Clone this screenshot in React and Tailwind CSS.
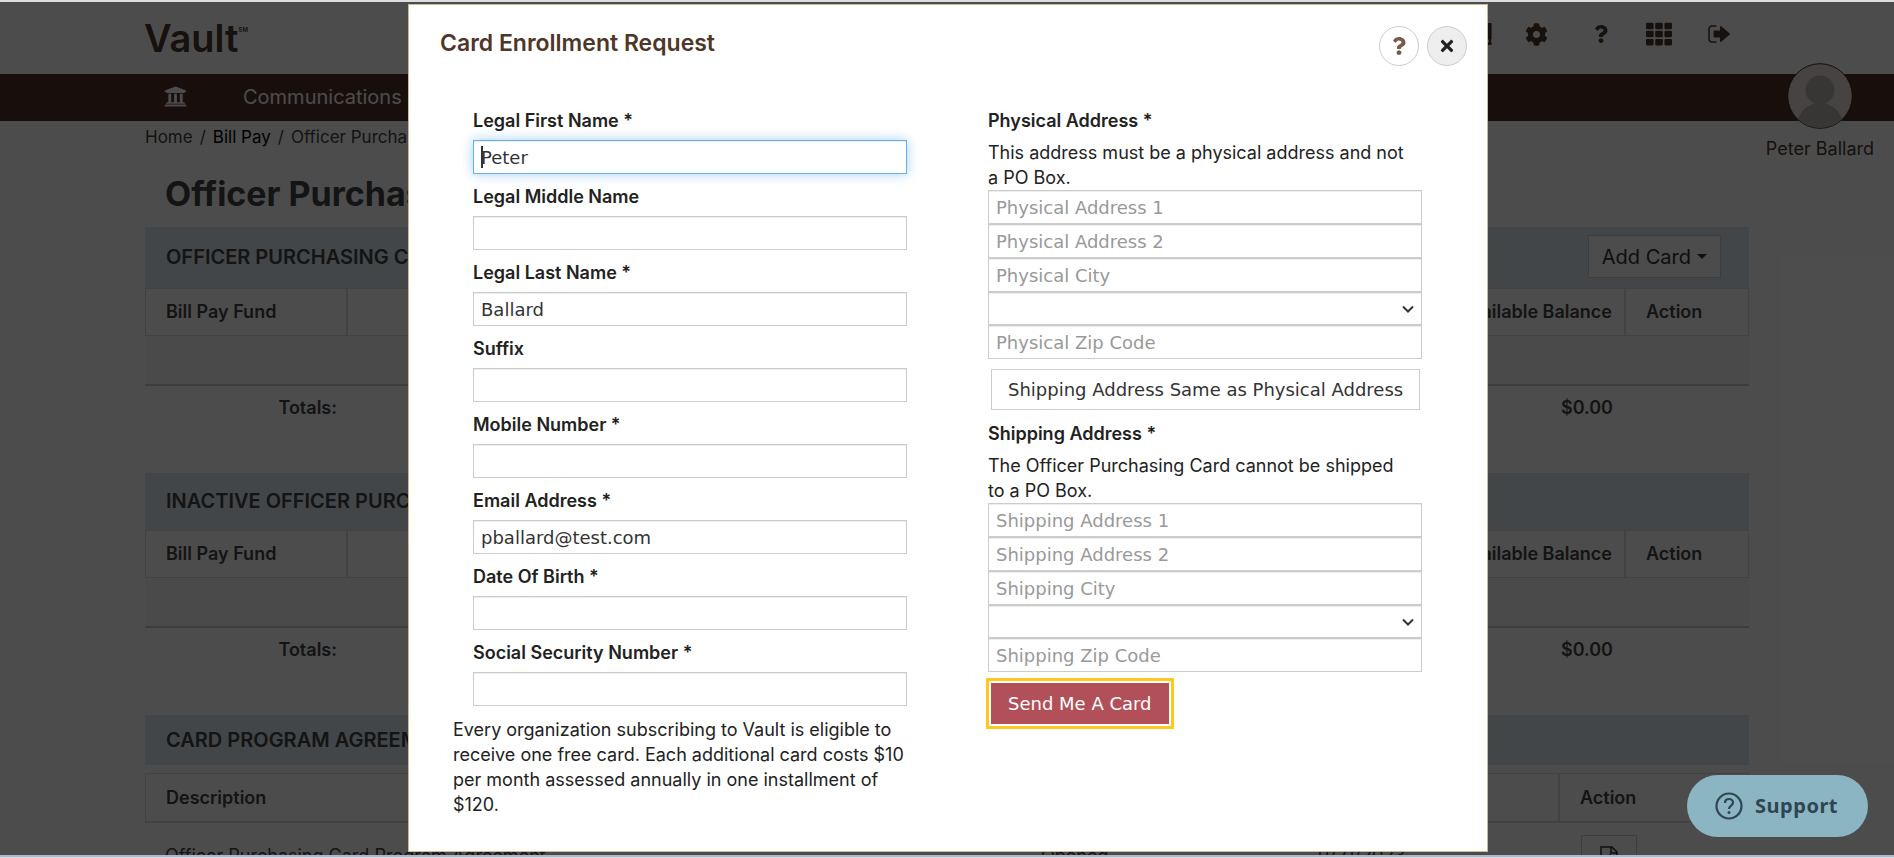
import { useState } from 'react'
import { FaBook, FaCog, FaQuestion, FaTh, FaTimes, FaUniversity } from 'react-icons/fa'

const personFields = [
  { name: 'firstName', label: 'Legal First Name *' },
  { name: 'middleName', label: 'Legal Middle Name' },
  { name: 'lastName', label: 'Legal Last Name *' },
  { name: 'suffix', label: 'Suffix' },
  { name: 'mobile', label: 'Mobile Number *' },
  { name: 'email', label: 'Email Address *' },
  { name: 'birthDate', label: 'Date Of Birth *' },
  { name: 'ssn', label: 'Social Security Number *' }
]

const inputBase =
  'block w-full px-[7px] bg-white border text-lg text-[#333] placeholder:text-[#999] font-[DejaVu_Sans,sans-serif] outline-none'
const inputClass = `${inputBase} h-[34px] border-[#ccc] shadow-[inset_0_1px_1px_rgba(0,0,0,0.075)]`
const selectClass = `${inputBase} h-[33px] appearance-none border-[#ccc] shadow-[inset_0_1px_1px_rgba(0,0,0,0.075)]`
const activeInputClass = `${inputBase} h-[34px] border-[#66afe9] shadow-[inset_0_1px_1px_rgba(0,0,0,0.075),0_0_12px_rgba(102,175,233,0.6)]`

function SignOutIcon() {
  return (
    <svg viewBox="0 0 22 18" className="w-[22px] h-[18px]">
      <path d="M8 1H4a3 3 0 0 0-3 3v10a3 3 0 0 0 3 3h4" fill="none" stroke="currentColor" strokeWidth="1.5" strokeLinecap="round" />
      <path d="M6.5 5.500H12V2c0-1 .8-1.300 1.500-.6l8 6.900c.4.400.4 1 0 1.400l-8 6.900c-.7.700-1.500.4-1.500-.6v-3.500H6.500c-.5 0-.9-.4-.9-.9V6.400c0-.5.4-.9.9-.9z" fill="currentColor" />
    </svg>
  )
}

function Header() {
  return (
    <header className="relative">
      <div className="h-[72px] flex items-center justify-between pl-[144px] pr-[164px] pb-2 text-[#4e3b30]">
        <a href="#" className="flex items-start pt-2 text-[38px] leading-[38px] font-semibold">
          Vault<span className="text-[6px] leading-none pt-2">SM</span>
        </a>
        <div className="flex items-center">
          <button aria-label="Library"><FaBook size={22} /></button>
          <button aria-label="Settings" className="ml-8"><FaCog size={23} /></button>
          <button aria-label="Help" className="ml-11"><FaQuestion size={18} /></button>
          <button aria-label="Apps" className="ml-9"><FaTh size={26} /></button>
          <button aria-label="Sign out" className="ml-9"><SignOutIcon /></button>
        </div>
      </div>
      <nav className="h-[47px] flex items-center pl-[164px] pb-[2px] bg-[#50302a] text-white text-xl">
        <a href="#" aria-label="Home" className="mr-14"><FaUniversity size={23} /></a>
        <a href="#">Communications</a>
      </nav>
      <div className="absolute right-5 top-[61px] flex flex-col items-center gap-[6px] text-[#4e3b30]">
        <svg viewBox="0 0 66 66" className="w-[66px] h-[66px]">
          <clipPath id="avatar"><circle cx="33" cy="33" r="32" /></clipPath>
          <circle cx="33" cy="33" r="32.300" fill="#ebe0dd" stroke="#333" strokeWidth="1" />
          <g fill="#b8b4b0" clipPath="url(#avatar)">
            <circle cx="33" cy="27" r="14.500" />
            <path d="M9 66c1-16 11-26 24-26s23 10 24 26z" />
          </g>
        </svg>
        <span className="text-lg leading-7">Peter Ballard</span>
      </div>
    </header>
  )
}

function FundPanel({ title, headClass, children }) {
  return (
    <section className="mb-[43px]">
      <div className={`${headClass} flex items-center justify-between bg-[#dce9f2] pl-[21px] pr-7 pb-[2px]`}>
        <h2 className="text-xl font-semibold">{title}</h2>
        {children}
      </div>
      <table className="w-full border-separate border-spacing-0 text-lg font-semibold">
        <thead>
          <tr className="h-12">
            <th className="w-[202px] pl-5 text-left font-semibold border border-[#ddd]">Bill Pay Fund</th>
            <th className="pr-3 text-right font-semibold border border-[#ddd]">Available Balance</th>
            <th className="w-[124px] pl-5 text-left font-semibold border border-[#ddd]">Action</th>
          </tr>
        </thead>
        <tbody>
          <tr className="h-[50px] bg-[#f9f9f9]">
            <td colSpan="3" className="border-b-2 border-[#ccc]"></td>
          </tr>
          <tr className="h-11">
            <td className="pr-[10px] text-right">Totals:</td>
            <td className="pr-3 text-right">$0.00</td>
            <td></td>
          </tr>
        </tbody>
      </table>
    </section>
  )
}

function AccountPage() {
  return (
    <div className="bg-white text-[#444]">
      <Header />
      <main className="px-[145px] text-[#444]">
        <ol className="flex h-8 items-center gap-[7px] pt-px text-[17px]">
          <li><a href="#">Home</a></li>
          <li>/</li>
          <li><a href="#" className="text-black">Bill Pay</a></li>
          <li>/</li>
          <li>Officer Purchasing Card</li>
        </ol>
        <h1 className="h-[74px] pt-5 pl-5 text-[34px] leading-[42px] font-bold">Officer Purchasing Card</h1>
        <FundPanel title="OFFICER PURCHASING CARDS" headClass="h-[61px]">
          <button className="flex items-center gap-[6px] h-[43px] px-[13px] bg-white border border-[#ccc] text-xl text-[#333]">
            Add Card
            <span className="border-x-5 border-t-5 border-x-transparent border-t-[#333]"></span>
          </button>
        </FundPanel>
        <FundPanel title="INACTIVE OFFICER PURCHASING CARDS" headClass="h-[57px]" />
        <section>
          <div className="flex items-center h-[50px] mb-2 pl-[21px] bg-[#dce9f2]">
            <h2 className="text-xl font-semibold">CARD PROGRAM AGREEMENTS</h2>
          </div>
          <table className="w-full border-separate border-spacing-0 text-lg">
            <thead>
              <tr className="h-[50px] text-left">
                <th className="pl-5 font-semibold border border-b-2 border-[#ddd]">Description</th>
                <th className="w-[274px] pl-5 font-semibold border border-b-2 border-[#ddd]"></th>
                <th className="w-[248px] pl-5 font-semibold border border-b-2 border-[#ddd]"></th>
                <th className="w-[190px] pl-5 font-semibold border border-b-2 border-[#ddd]">Action</th>
              </tr>
            </thead>
            <tbody>
              <tr className="h-[66px]">
                <td className="pl-5">Officer Purchasing Card Program Agreement</td>
                <td className="pl-1">Opened</td>
                <td className="pl-1">11/21/2023</td>
                <td className="pl-[22px]">
                  <button aria-label="Open agreement" className="flex items-center justify-center w-14 h-[42px] border border-[#ccc]">
                    <svg viewBox="0 0 18 20" className="w-[18px] h-5" fill="none" stroke="#333" strokeWidth="1.500">
                      <path d="M1 19V1h11l5 5v13zM11 1v6h6M7 14l3-5v3h3" />
                    </svg>
                  </button>
                </td>
              </tr>
            </tbody>
          </table>
        </section>
      </main>
    </div>
  )
}

function AddressFields({ kind, form, onChange }) {
  const key = kind.toLowerCase()
  const field = (suffix) => (
    <input
      aria-label={`${kind} ${suffix}`}
      placeholder={`${kind} ${suffix}`}
      value={form[key + suffix] || ''}
      onChange={(e) => onChange(key + suffix, e.target.value)}
      className={inputClass}
    />
  )
  return (
    <div>
      {field('Address 1')}
      {field('Address 2')}
      {field('City')}
      <div className="relative">
        <select aria-label={`${kind} State`} className={selectClass}>
          <option value=""></option>
          <option value="OH">OH</option>
        </select>
        <svg viewBox="0 0 12 8" className="absolute right-2 top-[13px] w-3 h-2 pointer-events-none">
          <path d="M1 1.500l5 5 5-5" fill="none" stroke="#333" strokeWidth="2" />
        </svg>
      </div>
      {field('Zip Code')}
    </div>
  )
}

function EnrollmentModal() {
  const [form, setForm] = useState({
    firstName: 'Peter',
    lastName: 'Ballard',
    email: 'pballard@test.com'
  })

  const handleChange = (name, value) => setForm({ ...form, [name]: value })

  const copyAddress = () => {
    const next = { ...form }
    for (const suffix of ['Address 1', 'Address 2', 'City', 'Zip Code']) {
      next['shipping' + suffix] = form['physical' + suffix]
    }
    setForm(next)
  }

  return (
    <div role="dialog" aria-labelledby="modal-title" className="w-full max-w-[1080px] mt-[2px] self-start bg-white border border-[#c9bb92] text-[#222]">
      <div className="flex items-start justify-between pt-[21px] pl-[31px] pr-5">
        <h3 id="modal-title" className="pt-[3px] text-[23px] leading-7 font-semibold text-[#4e3629]">Card Enrollment Request</h3>
        <div className="flex gap-2">
          <button aria-label="Help" className="flex items-center justify-center size-10 rounded-full border border-[#ccc] bg-white text-[#7a5a4a]">
            <FaQuestion size={18} />
          </button>
          <button aria-label="Close" className="flex items-center justify-center size-10 rounded-full border border-[#ccc] bg-[#eee] text-[#222]">
            <FaTimes size={18} />
          </button>
        </div>
      </div>
      <form onSubmit={(e) => e.preventDefault()} className="grid grid-cols-[434px_434px] gap-x-[81px] pt-[43px] pb-[34px] pl-16">
        <div>
          {personFields.map(({ name, label }) => (
            <div key={name} className="mb-[11px]">
              <label htmlFor={name} className="block h-[31px] text-lg leading-6 font-semibold">{label}</label>
              <div className="relative">
                <input
                  id={name}
                  value={form[name] || ''}
                  onChange={(e) => handleChange(name, e.target.value)}
                  className={name === 'firstName' ? activeInputClass : inputClass}
                />
                {name === 'firstName' && <span className="absolute left-2 top-[6px] w-[2px] h-[22px] bg-[#333]"></span>}
              </div>
            </div>
          ))}
          <p className="-ml-5 -mr-3 text-lg leading-[25px]">
            Every organization subscribing to Vault is eligible to receive one free card. Each additional card costs $10 per
            month assessed annually in one installment of $120.
          </p>
        </div>
        <div>
          <h4 className="text-lg leading-6 font-semibold">Physical Address *</h4>
          <p className="mt-[7px] pr-4 text-lg leading-[25px]">This address must be a physical address and not a PO Box.</p>
          <AddressFields kind="Physical" form={form} onChange={handleChange} />
          <button
            type="button"
            onClick={copyAddress}
            className="block h-[41px] mt-[10px] ml-[3px] px-4 border border-[#ccc] bg-white text-lg text-[#333] font-[DejaVu_Sans,sans-serif]"
          >
            Shipping Address Same as Physical Address
          </button>
          <h4 className="mt-3 text-lg leading-6 font-semibold">Shipping Address *</h4>
          <p className="mt-[7px] pr-4 text-lg leading-[25px]">The Officer Purchasing Card cannot be shipped to a PO Box.</p>
          <AddressFields kind="Shipping" form={form} onChange={handleChange} />
          <button
            type="submit"
            className="h-[41px] mt-[11px] ml-[3px] px-[17px] bg-[#b2505a] text-lg text-white font-[DejaVu_Sans,sans-serif] outline-3 outline-offset-2 outline-[#ffc81a]"
          >
            Send Me A Card
          </button>
        </div>
      </form>
    </div>
  )
}

export default function App() {
  return (
    <div className="h-screen flex flex-col overflow-hidden font-[Inter,sans-serif]">
      <div className="h-[2px] shrink-0 bg-[#dadee1]"></div>
      <div className="relative flex-1 overflow-hidden">
        <AccountPage />
        <div className="absolute inset-0 flex justify-center pl-[2px] bg-black/70">
          <EnrollmentModal />
        </div>
        <button className="absolute right-[26px] bottom-[18px] flex items-center gap-3 h-[62px] pl-7 pr-[30px] rounded-full bg-[#8bb5c3] text-[#2f4650] text-xl font-bold font-[Noto_Sans,sans-serif] tracking-wide">
          <svg viewBox="0 0 28 28" className="size-7" fill="none" stroke="currentColor" strokeWidth="2.200">
            <circle cx="14" cy="14" r="12.500" />
            <path d="M10 11c0-2.500 1.800-4 4-4s4 1.500 4 3.600c0 2.900-4 3.100-4 6.400" />
            <circle cx="14" cy="20.500" r="1.500" fill="currentColor" stroke="none" />
          </svg>
          Support
        </button>
      </div>
      <div className="h-[3px] shrink-0 bg-[#d5dcea] border-t-2 border-[#b0b6c6]"></div>
    </div>
  )
}
